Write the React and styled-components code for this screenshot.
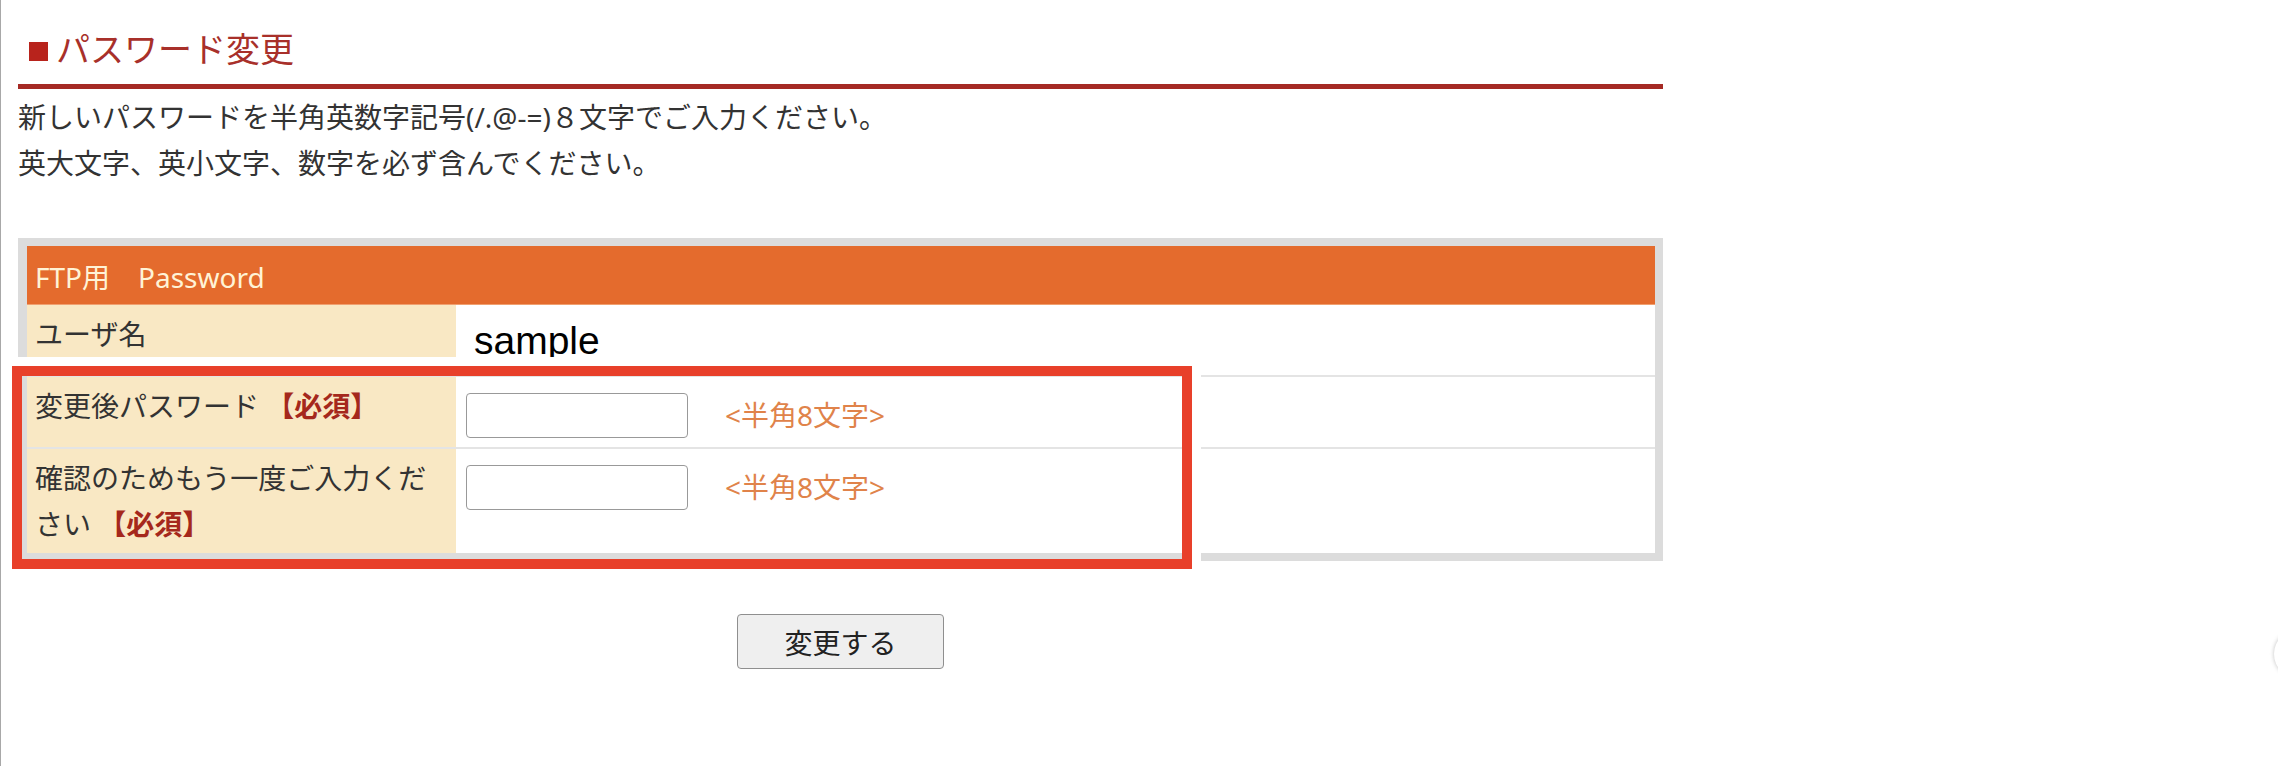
import React from "react";
import styled, { createGlobalStyle } from "styled-components";

const GlobalStyle = createGlobalStyle`
  html, body {
    margin: 0;
    padding: 0;
    background: #fff;
  }
  body {
    font-family: "Noto Sans", "Noto Sans CJK JP", sans-serif;
    color: #333;
  }
`;

function App() {
  // data
  const rows = [
    { label: "変更後パスワード", required: true, height: 70 },
    { label: "確認のためもう一度ご入力ください", required: true, height: 104 },
  ];

  return (
    <Page>
      <GlobalStyle />
      <Content>
        <Title>
          <TitleMark />
          パスワード変更
        </Title>
        <Lead>
          新しいパスワードを半角英数字記号(/.@-=)８文字でご入力ください。
          <br />
          英大文字、英小文字、数字を必ず含んでください。
        </Lead>

        <Frame>
          <Header>FTP用　Password</Header>
          <Row height={70}>
            <Label>ユーザ名</Label>
            <Value>
              <UserName>sample</UserName>
            </Value>
          </Row>
          {rows.map((row) => (
            <Row key={row.label} height={row.height} divided>
              <Label>
                {row.label} <Required>【必須】</Required>
              </Label>
              <Value>
                <Field>
                  <TextInput type="password" />
                  <Hint>&lt;半角8文字&gt;</Hint>
                </Field>
              </Value>
            </Row>
          ))}
        </Frame>

        <Actions>
          <SubmitButton type="button">変更する</SubmitButton>
        </Actions>
      </Content>

      <Highlight />
      <FloatingDot />
    </Page>
  );
}

export default App;

// styles
const Page = styled.div`
  position: relative;
  width: 2278px;
  height: 766px;
  overflow: hidden;
  border-left: 1px solid #a8a8a8;
  box-sizing: border-box;
`;

const Content = styled.div`
  width: 1645px;
  padding-left: 17px;
`;

const Title = styled.h1`
  display: flex;
  align-items: center;
  margin: 0;
  padding: 25px 0 11px 0;
  font-size: 34px;
  line-height: 48px;
  font-weight: 400;
  color: #a8302a;
  border-bottom: 5px solid #a52a24;
`;

const TitleMark = styled.span`
  display: inline-block;
  width: 19px;
  height: 19px;
  margin: 5px 8px 0 11px;
  background: #b8231c;
`;

const Lead = styled.p`
  margin: 5px 0 0 0;
  font-size: 28px;
  line-height: 46px;
  color: #333;
`;

const Frame = styled.div`
  margin-top: 52px;
  padding: 8px 8px 8px 9px;
  background: #dcdcdc;
`;

const Header = styled.div`
  display: flex;
  align-items: center;
  height: 59px;
  padding-left: 8px;
  background: #e46b2d;
  color: #fff3d6;
  font-size: 28px;
  box-shadow: inset 0 -1px 0 #f0a070;
`;

const Row = styled.div`
  display: grid;
  grid-template-columns: 429px 1fr;
  height: ${(p) => p.height}px;
  border-top: ${(p) => (p.divided ? "2px solid #e4e4e4" : "none")};
  box-sizing: content-box;
`;

const Label = styled.div`
  padding: 6px 8px 0 8px;
  background: #f9e8c4;
  font-size: 28px;
  line-height: 46px;
  color: #333;
`;

const Required = styled.span`
  color: #a5281c;
  font-weight: 700;
`;

const Value = styled.div`
  background: #fff;
  padding: 15px 0 0 10px;
`;

const UserName = styled.div`
  padding: 0 0 0 8px;
  margin-top: -1px;
  font-family: "Liberation Sans", Arial, sans-serif;
  font-size: 39px;
  line-height: 44px;
  color: #000;
`;

const Field = styled.div`
  display: flex;
  align-items: center;
`;

const TextInput = styled.input`
  width: 222px;
  height: 45px;
  box-sizing: border-box;
  border: 1px solid #999;
  border-radius: 4px;
  background: #fff;
  outline: none;
`;

const Hint = styled.span`
  margin-left: 37px;
  font-size: 28px;
  line-height: 46px;
  color: #e0834a;
`;

const Actions = styled.div`
  display: flex;
  justify-content: center;
  padding-top: 53px;
`;

const SubmitButton = styled.button`
  width: 207px;
  height: 55px;
  border: 1px solid #8f8f8f;
  border-radius: 4px;
  background: #efefef;
  font-family: "Noto Sans", "Noto Sans CJK JP", sans-serif;
  font-size: 28px;
  color: #222;
`;

const Highlight = styled.div`
  position: absolute;
  left: 11px;
  top: 366px;
  width: 1180px;
  height: 203px;
  box-sizing: border-box;
  border: 10px solid #e8402a;
  box-shadow: 0 0 0 9px #fff;
`;

const FloatingDot = styled.div`
  position: absolute;
  left: 2273px;
  top: 630px;
  width: 48px;
  height: 48px;
  border-radius: 50%;
  background: #fff;
  box-shadow: 0 0 4px rgba(0, 0, 0, 0.25);
`;
